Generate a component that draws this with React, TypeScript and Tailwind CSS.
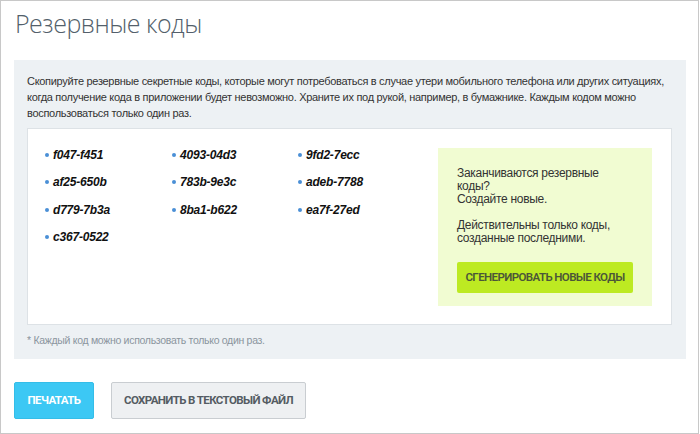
const codes = [
  "f047-f451",
  "4093-04d3",
  "9fd2-7ecc",
  "af25-650b",
  "783b-9e3c",
  "adeb-7788",
  "d779-7b3a",
  "8ba1-b622",
  "ea7f-27ed",
  "c367-0522",
];

export default function App() {
  return (
    <div className="w-[699px] h-[434px] border border-[#c8c8c8] bg-white font-['Liberation_Sans',Arial,sans-serif]">
      {/* Title */}
      <h1 className="pl-[14px] pt-[4px] h-[59px] text-[25px] leading-[36px] font-light tracking-[-0.5px] text-[#535f6b] font-['Open_Sans',sans-serif]">
        Резервные коды
      </h1>

      {/* Gray panel */}
      <div className="mx-[13px] w-[672px] h-[299px] bg-[#edf1f4] px-[13px] pt-[13px]">
        <p className="text-[11px] leading-[16px] text-[#333] whitespace-nowrap tracking-[-0.3px]">
          Скопируйте резервные секретные коды, которые могут потребоваться в случае утери мобильного телефона или других ситуациях,
          <br />
          когда получение кода в приложении будет невозможно. Храните их под рукой, например, в бумажнике. Каждым кодом можно
          <br />
          воспользоваться только один раз.
        </p>

        <div className="mt-[7px] w-[645px] h-[197px] bg-white border border-[#dde2e6] flex justify-between items-start pl-[17px] pr-[19px] pt-[19px]">
          <ul className="grid grid-cols-[127px_126px_126px] -mt-[7px]">
            {codes.map((c) => (
              <li key={c} className="flex items-center h-[27.5px] text-[12px] font-bold italic text-[#111] tracking-[-0.2px]">
                <span className="w-[4px] h-[4px] rounded-full bg-[#4a8fd6] mr-[4px]"></span>
                {c}
              </li>
            ))}
          </ul>

          <div className="w-[214px] h-[158px] bg-[#f1fcd2] px-[19px] pt-[19px] text-[12px] leading-[13px] text-[#333] tracking-[-0.3px]">
            <p>
              Заканчиваются резервные
              <br />
              коды?
              <br />
              Создайте новые.
            </p>
            <p className="mt-[13px]">
              Действительны только коды,
              <br />
              созданные последними.
            </p>
            <button className="mt-[17px] w-[176px] h-[31px] bg-[#bdea22] rounded-[2px] text-[11.5px] font-semibold text-[#4b5638] font-['Roboto',sans-serif] tracking-[-0.6px]">
              СГЕНЕРИРОВАТЬ НОВЫЕ КОДЫ
            </button>
          </div>
        </div>

        <p className="mt-[7px] text-[10.5px] leading-[16px] text-[#8b959e] tracking-[-0.3px]">
          * Каждый код можно использовать только один раз.
        </p>
      </div>

      {/* Action buttons */}
      <div className="flex gap-[17px] pl-[13px] mt-[23px]">
        <button className="w-[80px] h-[37px] bg-[#3cc8f4] border border-[#34bde8] rounded-[2px] text-white text-[11.5px] font-bold font-['Roboto',sans-serif] tracking-[-0.6px]">
          ПЕЧАТАТЬ
        </button>
        <button className="w-[195px] h-[37px] bg-[#eef0f2] border border-[#c9cdd1] rounded-[2px] text-[#555c63] text-[11.5px] font-bold font-['Roboto',sans-serif] tracking-[-0.6px]">
          СОХРАНИТЬ В ТЕКСТОВЫЙ ФАЙЛ
        </button>
      </div>
    </div>
  );
}
